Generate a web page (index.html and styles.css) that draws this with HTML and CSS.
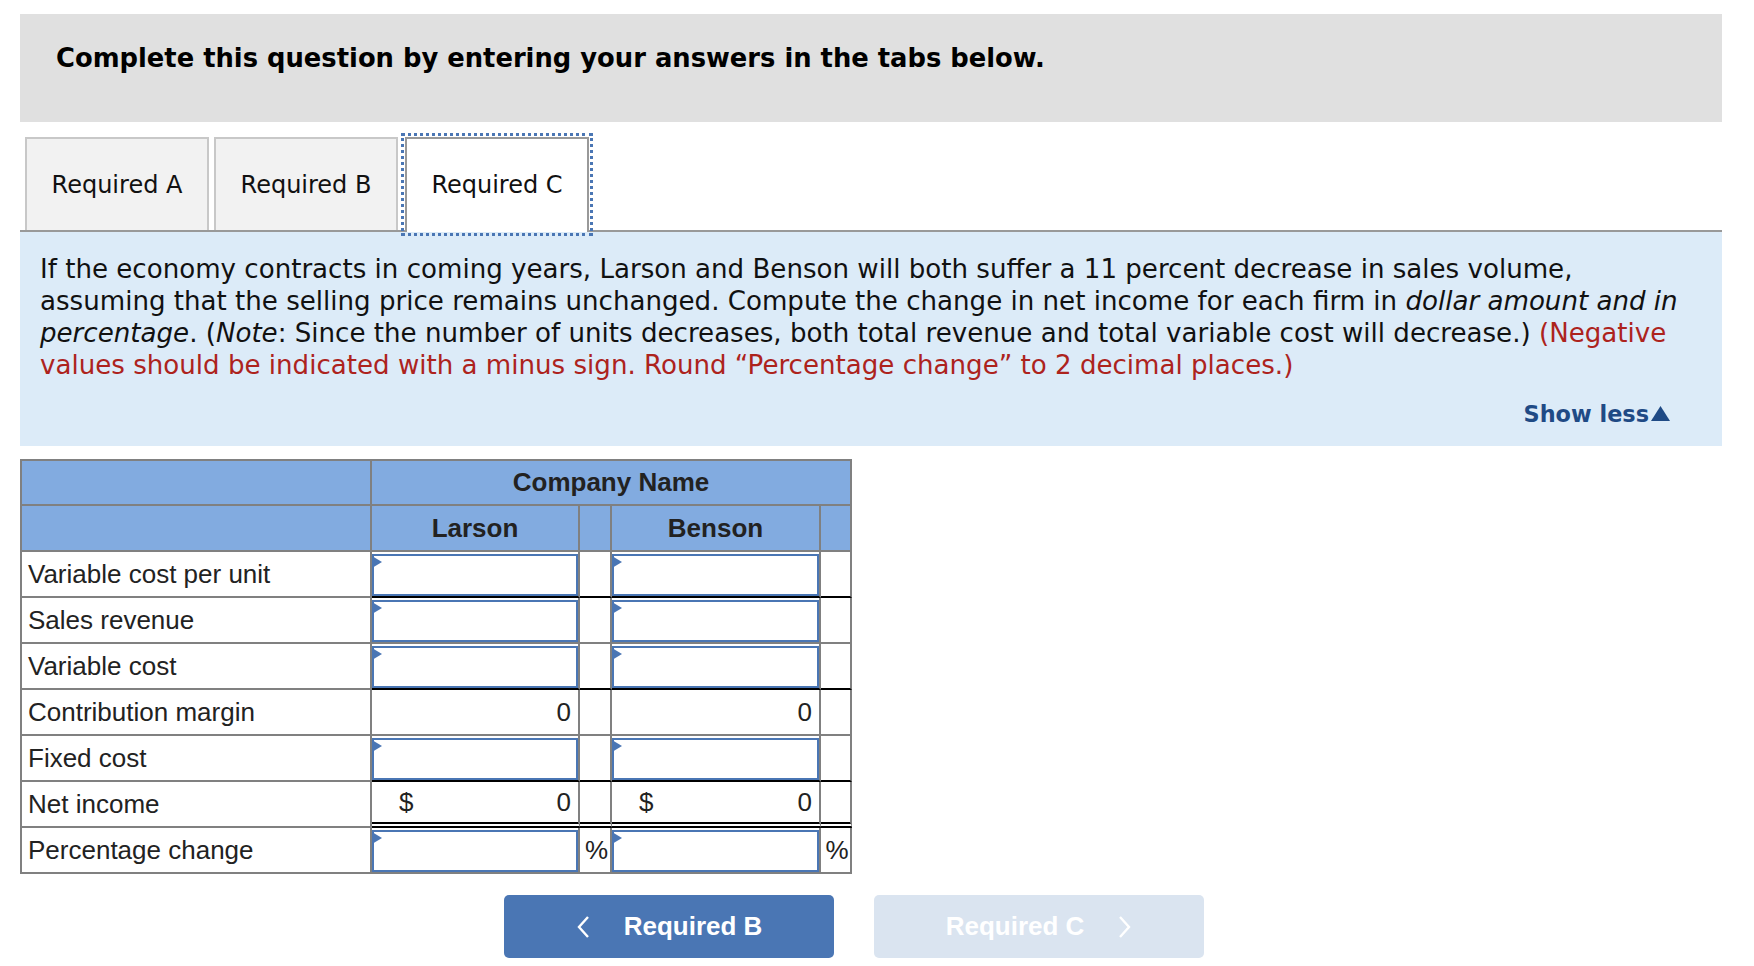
FILE: index.html
```html
<!DOCTYPE html>
<html lang="en">
<head>
<meta charset="utf-8">
<title>Required C</title>
<link rel="stylesheet" href="styles.css">
</head>
<body>
<div class="page">
  <div class="banner">Complete this question by entering your answers in the tabs below.</div>

  <div class="tabs">
    <div class="tab">Required A</div>
    <div class="tab">Required B</div>
    <div class="tab tab-active">Required C</div>
  </div>

  <div class="prompt">
    <p class="prompt-text">If the economy contracts in coming years, Larson and Benson will both suffer a 11 percent decrease in sales volume,<br>assuming that the selling price remains unchanged. Compute the change in net income for each firm in <i>dollar amount and in</i><br><i>percentage</i>. (<i>Note</i>: Since the number of units decreases, both total revenue and total variable cost will decrease.) <span class="warn">(Negative<br>values should be indicated with a minus sign. Round “Percentage change” to 2 decimal places.)</span></p>
    <div class="show-less">Show less<svg class="tri" width="19" height="15" viewBox="0 0 19 15"><path d="M9.5 0 L19 15 L0 15 Z" fill="#1f4a85"/></svg></div>
  </div>

  <div class="grid">
    <div class="cell hd"></div>
    <div class="cell hd span4">Company Name</div>

    <div class="cell hd"></div>
    <div class="cell hd">Larson</div>
    <div class="cell hd"></div>
    <div class="cell hd">Benson</div>
    <div class="cell hd"></div>

    <div class="cell label">Variable cost per unit</div>
    <div class="cell in rule"><div class="field"></div></div>
    <div class="cell rule"></div>
    <div class="cell in rule"><div class="field"></div></div>
    <div class="cell rule"></div>

    <div class="cell label">Sales revenue</div>
    <div class="cell in"><div class="field"></div></div>
    <div class="cell"></div>
    <div class="cell in"><div class="field"></div></div>
    <div class="cell"></div>

    <div class="cell label">Variable cost</div>
    <div class="cell in rule"><div class="field"></div></div>
    <div class="cell rule"></div>
    <div class="cell in rule"><div class="field"></div></div>
    <div class="cell rule"></div>

    <div class="cell label">Contribution margin</div>
    <div class="cell num">0</div>
    <div class="cell"></div>
    <div class="cell num">0</div>
    <div class="cell"></div>

    <div class="cell label">Fixed cost</div>
    <div class="cell in rule"><div class="field"></div></div>
    <div class="cell rule"></div>
    <div class="cell in rule"><div class="field"></div></div>
    <div class="cell rule"></div>

    <div class="cell label">Net income</div>
    <div class="cell money dbl"><span>$</span><span>0</span></div>
    <div class="cell dbl"></div>
    <div class="cell money dbl"><span>$</span><span>0</span></div>
    <div class="cell dbl"></div>

    <div class="cell label">Percentage change</div>
    <div class="cell in"><div class="field"></div></div>
    <div class="cell pct">%</div>
    <div class="cell in"><div class="field"></div></div>
    <div class="cell pct">%</div>
  </div>

  <div class="nav">
    <button class="btn btn-prev" type="button">
      <svg class="chev" width="14" height="24" viewBox="0 0 14 24"><path d="M12 2 L3 12 L12 22" fill="none" stroke="#ffffff" stroke-width="2.4"/></svg>
      <span>Required B</span>
    </button>
    <button class="btn btn-next" type="button" disabled>
      <span>Required C</span>
      <svg class="chev" width="14" height="24" viewBox="0 0 14 24"><path d="M2 2 L11 12 L2 22" fill="none" stroke="#ffffff" stroke-width="2.4"/></svg>
    </button>
  </div>
</div>
</body>
</html>
```

FILE: styles.css
```css
html, body {
  margin: 0;
  padding: 0;
  background: #ffffff;
}

.page {
  width: 1702px;
  margin-left: 20px;
  padding-top: 14px;
  font-family: "DejaVu Sans", Verdana, sans-serif;
  color: #000;
}

.banner {
  box-sizing: border-box;
  height: 108px;
  background: #e0e0e0;
  padding: 29px 0 0 36px;
  font-size: 25.8px;
  line-height: 30px;
  font-weight: bold;
}

.tabs {
  display: flex;
  align-items: flex-start;
  padding-top: 15px;
  border-bottom: 2px solid #999999;
}

.tab {
  box-sizing: border-box;
  width: 184px;
  height: 93px;
  margin-left: 5px;
  border: 2px solid #c8c8c8;
  border-bottom: none;
  background: #f2f2f2;
  display: flex;
  align-items: center;
  justify-content: center;
  font-size: 24px;
  color: #111;
}

.tab-active {
  margin-left: 7px;
  height: 95px;
  margin-bottom: -2px;
  background: #ffffff;
  border-color: #999999;
  outline: 3px dotted #4a76b4;
  outline-offset: 1px;
  padding-bottom: 2px;
}

.prompt {
  background: #dcebf8;
  padding: 21px 20px 18px 20px;
}

.prompt-text {
  margin: 0;
  font-size: 26.1px;
  line-height: 32px;
  color: #111;
  white-space: nowrap;
}

.warn {
  color: #ad231d;
}

.show-less {
  margin-top: 19px;
  display: flex;
  justify-content: flex-end;
  align-items: center;
  padding-right: 32px;
  font-size: 22.4px;
  line-height: 28px;
  font-weight: bold;
  color: #1f4a85;
}

.tri {
  margin-left: 2px;
  margin-bottom: 1px;
}

.grid {
  margin-top: 13px;
  display: grid;
  grid-template-columns: 350px 208px 32px 209px 31px;
  width: max-content;
  border-left: 2px solid #808080;
  border-top: 2px solid #808080;
  font-family: "Liberation Sans", Arial, sans-serif;
  font-size: 26px;
  color: #222;
}

.cell {
  box-sizing: border-box;
  height: 46px;
  border-right: 2px solid #808080;
  border-bottom: 2px solid #808080;
  display: flex;
  align-items: center;
  background: #ffffff;
}

.hd {
  background: #82abe0;
  font-weight: bold;
  justify-content: center;
}

.grid > .hd:nth-child(-n+2) {
  height: 45px;
}

.span4 {
  grid-column: span 4;
}

.label {
  padding-left: 6px;
}

.rule {
  border-bottom-color: #000000;
}

.dbl {
  border-bottom: 6px double #000000;
}

.in {
  align-items: flex-start;
  padding-top: 2px;
}

.field {
  position: relative;
  box-sizing: border-box;
  width: 100%;
  height: 42px;
  border: 2px solid #4a76b4;
  background: #ffffff;
}

.field::before {
  content: "";
  position: absolute;
  left: -2px;
  top: 0;
  width: 0;
  height: 0;
  border-left: 10px solid #4a76b4;
  border-top: 6px solid transparent;
  border-bottom: 6px solid transparent;
}

.num {
  justify-content: flex-end;
  padding-right: 7px;
}

.money {
  justify-content: space-between;
  padding: 0 7px 0 27px;
}

.pct {
  justify-content: center;
  padding-left: 3px;
}

.nav {
  display: flex;
  gap: 40px;
  margin-top: 21px;
  padding-left: 484px;
}

.btn {
  box-sizing: border-box;
  width: 330px;
  height: 63px;
  border: none;
  border-radius: 5px;
  display: flex;
  align-items: center;
  justify-content: center;
  gap: 34px;
  font-family: "Liberation Sans", Arial, sans-serif;
  font-size: 26px;
  font-weight: bold;
  color: #ffffff;
  padding: 0;
}

.btn-prev {
  background: #4a76b4;
}

.btn-next {
  background: #dae4f0;
}
```
